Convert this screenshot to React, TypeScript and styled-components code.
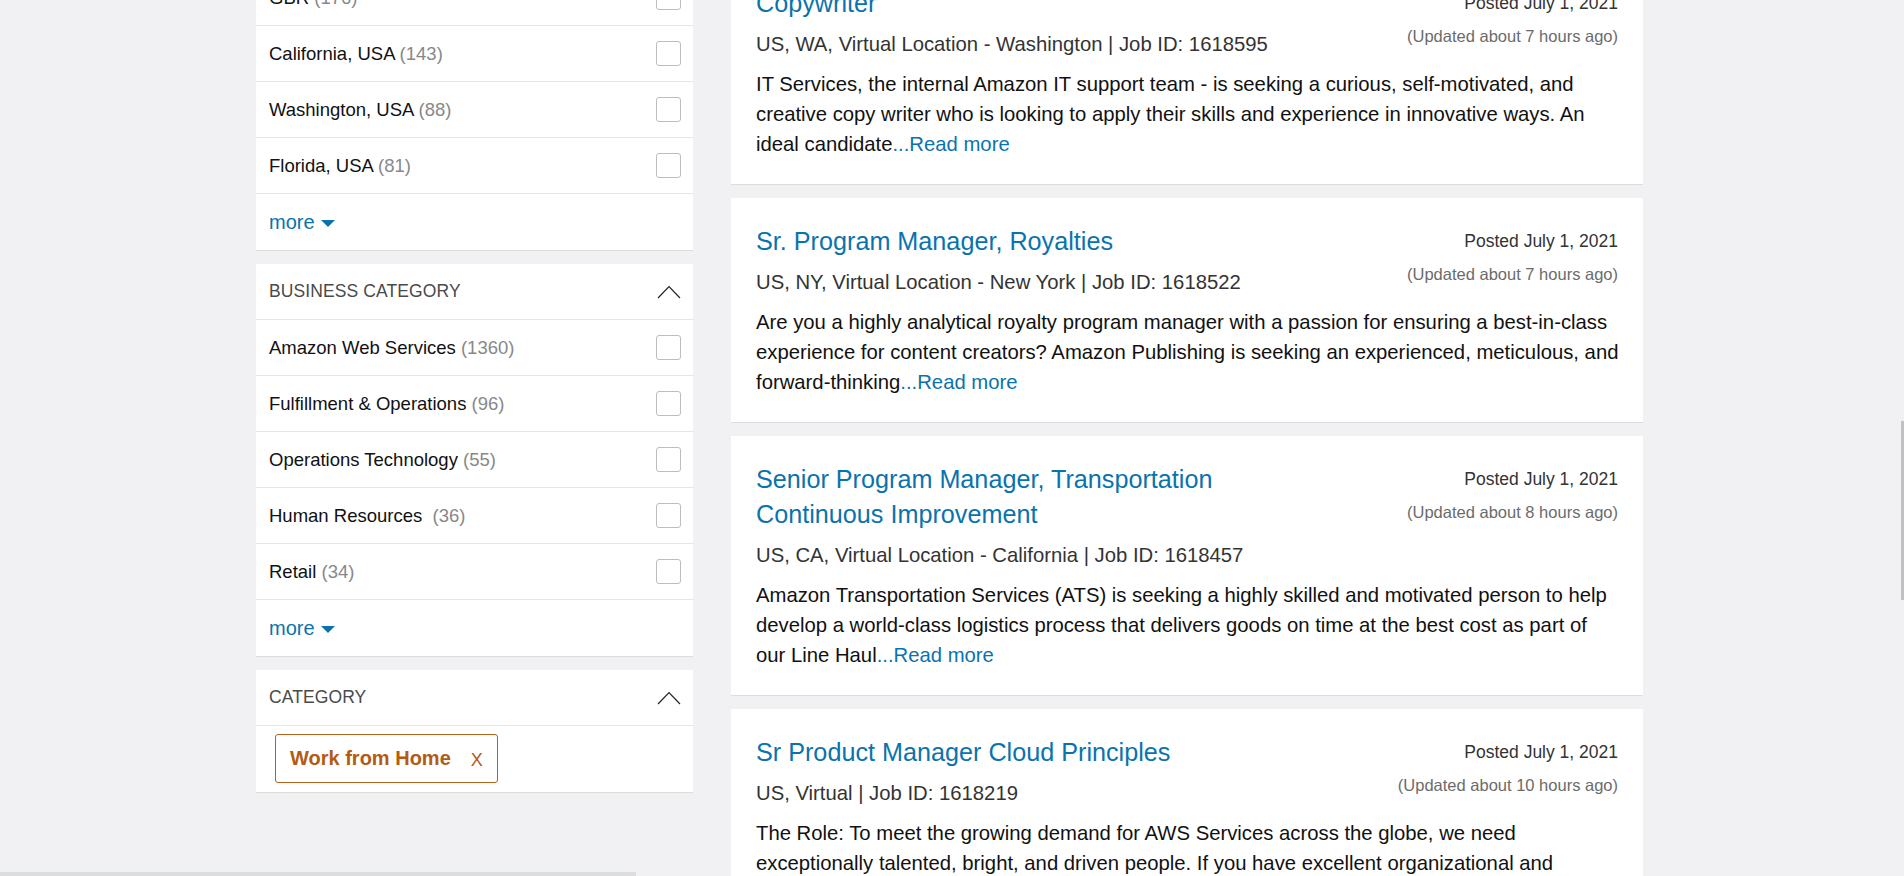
import React from "react";
import styled, { createGlobalStyle } from "styled-components";

const LINK = "#0a73ad";

const GlobalStyle = createGlobalStyle`
  * { box-sizing: border-box; }
  html, body {
    margin: 0;
    padding: 0;
    height: 100%;
    overflow: hidden;
    background: #f1f1f3;
  }
  body {
    font-family: "Liberation Sans", Arial, sans-serif;
    color: #111111;
  }
`;

type Filter = { label: string; count: number };
type Job = {
  title: string[];
  meta: string;
  posted: string;
  updated: string;
  lines: string[];
  tail: string;
};

const locations: Filter[] = [
  { label: "GBR", count: 176 },
  { label: "California, USA", count: 143 },
  { label: "Washington, USA", count: 88 },
  { label: "Florida, USA", count: 81 },
];

const businessCategories: Filter[] = [
  { label: "Amazon Web Services", count: 1360 },
  { label: "Fulfillment & Operations", count: 96 },
  { label: "Operations Technology", count: 55 },
  { label: "Human Resources\u00a0", count: 36 },
  { label: "Retail", count: 34 },
];

const jobs: Job[] = [
  {
    title: ["Copywriter"],
    meta: "US, WA, Virtual Location - Washington | Job ID: 1618595",
    posted: "Posted July 1, 2021",
    updated: "(Updated about 7 hours ago)",
    lines: [
      "IT Services, the internal Amazon IT support team - is seeking a curious, self-motivated, and",
      "creative copy writer who is looking to apply their skills and experience in innovative ways. An",
    ],
    tail: "ideal candidate",
  },
  {
    title: ["Sr. Program Manager, Royalties"],
    meta: "US, NY, Virtual Location - New York | Job ID: 1618522",
    posted: "Posted July 1, 2021",
    updated: "(Updated about 7 hours ago)",
    lines: [
      "Are you a highly analytical royalty program manager with a passion for ensuring a best-in-class",
      "experience for content creators? Amazon Publishing is seeking an experienced, meticulous, and",
    ],
    tail: "forward-thinking",
  },
  {
    title: ["Senior Program Manager, Transportation", "Continuous Improvement"],
    meta: "US, CA, Virtual Location - California | Job ID: 1618457",
    posted: "Posted July 1, 2021",
    updated: "(Updated about 8 hours ago)",
    lines: [
      "Amazon Transportation Services (ATS) is seeking a highly skilled and motivated person to help",
      "develop a world-class logistics process that delivers goods on time at the best cost as part of",
    ],
    tail: "our Line Haul",
  },
  {
    title: ["Sr Product Manager Cloud Principles"],
    meta: "US, Virtual | Job ID: 1618219",
    posted: "Posted July 1, 2021",
    updated: "(Updated about 10 hours ago)",
    lines: [
      "The Role: To meet the growing demand for AWS Services across the globe, we need",
      "exceptionally talented, bright, and driven people. If you have excellent organizational and",
    ],
    tail: "",
  },
];

function ChevronUp() {
  return (
    <svg width="24" height="14" viewBox="0 0 24 14">
      <polyline
        points="1,13 12,1.5 23,13"
        fill="none"
        stroke="#222222"
        strokeWidth="1.2"
      />
    </svg>
  );
}

function Caret() {
  return (
    <svg width="14" height="7" viewBox="0 0 14 7">
      <polygon points="0,0 14,0 7,7" fill={LINK} />
    </svg>
  );
}

function FilterRows({ items }: { items: Filter[] }) {
  return (
    <>
      {items.map((item) => (
        <FilterRow key={item.label}>
          <span>
            {item.label} <Count>({item.count})</Count>
          </span>
          <Checkbox />
        </FilterRow>
      ))}
      <MoreRow>
        more
        <Caret />
      </MoreRow>
    </>
  );
}

function PanelTitle({ title }: { title: string }) {
  return (
    <PanelHeader>
      <span>{title}</span>
      <ChevronUp />
    </PanelHeader>
  );
}

function JobCard({ job }: { job: Job }) {
  return (
    <Card>
      <CardHead>
        <TitleCol>
          <Title>
            {job.title.map((t, i) => (
              <React.Fragment key={t}>
                {i > 0 && <br />}
                {t}
              </React.Fragment>
            ))}
          </Title>
          <Meta>{job.meta}</Meta>
        </TitleCol>
        <Dates>
          <Posted>{job.posted}</Posted>
          <Updated>{job.updated}</Updated>
        </Dates>
      </CardHead>
      <Desc>
        {job.lines.map((line) => (
          <React.Fragment key={line}>
            {line}
            <br />
          </React.Fragment>
        ))}
        {job.tail}
        <ReadMore>...Read more</ReadMore>
      </Desc>
    </Card>
  );
}

export default function App() {
  return (
    <>
      <GlobalStyle />
      <Page>
        <Sidebar>
          <Panel>
            <PanelTitle title="Location" />
            <FilterRows items={locations} />
          </Panel>
          <Panel>
            <PanelTitle title="Business Category" />
            <FilterRows items={businessCategories} />
          </Panel>
          <Panel>
            <PanelTitle title="Category" />
            <TagArea>
              <Tag>
                Work from Home
                <TagClose>x</TagClose>
              </Tag>
            </TagArea>
          </Panel>
        </Sidebar>
        <Results>
          {jobs.map((job) => (
            <JobCard key={job.meta} job={job} />
          ))}
        </Results>
      </Page>
      <VScrollThumb />
      <HScrollThumb />
    </>
  );
}

const Page = styled.div`
  display: grid;
  grid-template-columns: 437px 912px;
  column-gap: 38px;
  align-items: start;
  padding-left: 256px;
  margin-top: -86px;
`;

const Sidebar = styled.aside`
  display: flex;
  flex-direction: column;
  gap: 13px;
`;

const Panel = styled.section`
  background: #ffffff;
  border-bottom: 1px solid #dcdcdc;
`;

const PanelHeader = styled.div`
  height: 56px;
  display: flex;
  align-items: center;
  justify-content: space-between;
  padding: 0 12px 0 13px;
  border-bottom: 1px solid #e6e6e6;
  font-size: 17.5px;
  color: #4a4a4a;
  text-transform: uppercase;
  letter-spacing: 0.1px;
`;

const FilterRow = styled.div`
  height: 56px;
  display: flex;
  align-items: center;
  justify-content: space-between;
  padding: 0 12px 0 13px;
  border-bottom: 1px solid #e6e6e6;
  font-size: 18.5px;
  color: #111111;
`;

const Count = styled.span`
  color: #888888;
`;

const Checkbox = styled.span`
  width: 25px;
  height: 25px;
  border: 1px solid #bdbdbd;
  border-radius: 3px;
  background: #ffffff;
`;

const MoreRow = styled.div`
  height: 56px;
  display: flex;
  align-items: center;
  gap: 6px;
  padding-left: 13px;
  font-size: 20px;
  color: ${LINK};
  svg {
    margin-top: 3px;
  }
`;

const TagArea = styled.div`
  padding: 8px 0 9px 19px;
`;

const Tag = styled.span`
  display: inline-flex;
  align-items: center;
  gap: 20px;
  height: 49px;
  padding: 0 14px;
  border: 1px solid #b6621c;
  border-radius: 3px;
  color: #b35b14;
  font-weight: bold;
  font-size: 20px;
`;

const TagClose = styled.span`
  font-weight: normal;
  font-size: 18px;
  text-transform: uppercase;
  margin-top: 4px;
`;

const Results = styled.main`
  display: flex;
  flex-direction: column;
  gap: 13px;
  padding-top: 46px;
`;

const Card = styled.article`
  background: #ffffff;
  border-bottom: 1px solid #dcdcdc;
  padding: 26px 25px 25px 25px;
`;

const CardHead = styled.div`
  display: flex;
  justify-content: space-between;
  align-items: flex-start;
`;

const TitleCol = styled.div`
  display: flex;
  flex-direction: column;
`;

const Title = styled.h2`
  margin: 0;
  font-weight: normal;
  font-size: 25.2px;
  line-height: 35px;
  color: ${LINK};
`;

const Meta = styled.div`
  margin-top: 8px;
  font-size: 20.3px;
  line-height: 30px;
  color: #333333;
`;

const Dates = styled.div`
  display: flex;
  flex-direction: column;
  align-items: flex-end;
  white-space: nowrap;
`;

const Posted = styled.div`
  font-size: 17.5px;
  line-height: 35px;
  color: #333333;
`;

const Updated = styled.div`
  font-size: 16.5px;
  line-height: 31px;
  color: #6b6b6b;
`;

const Desc = styled.p`
  margin: 10px 0 0;
  font-size: 20.3px;
  line-height: 30px;
  color: #111111;
  white-space: nowrap;
`;

const ReadMore = styled.a`
  color: ${LINK};
  text-decoration: none;
`;

const VScrollThumb = styled.div`
  position: fixed;
  right: 0;
  top: 421px;
  width: 3px;
  height: 179px;
  background: #c1c1c1;
`;

const HScrollThumb = styled.div`
  position: fixed;
  left: 0;
  bottom: 0;
  width: 636px;
  height: 4px;
  background: #dcdddf;
`;
